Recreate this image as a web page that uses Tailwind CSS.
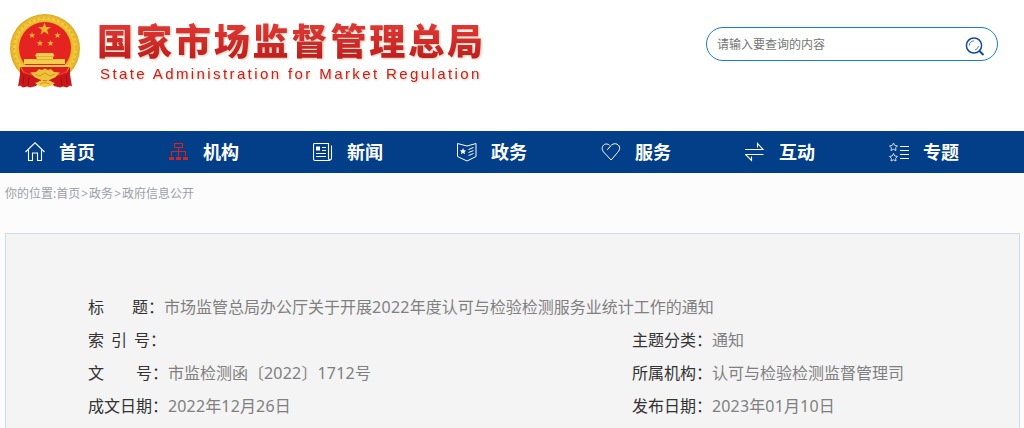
<!DOCTYPE html>
<html lang="zh-CN">
<head>
  <meta charset="UTF-8">
  <meta name="viewport" content="width=device-width, initial-scale=1.0">
  <title>国家市场监督管理总局</title>
  <script src="https://cdn.jsdelivr.net/npm/@tailwindcss/browser@4"></script>
</head>
<body class="bg-[#fcfcfc] font-['Noto_Sans','Noto_Sans_CJK_SC',sans-serif]">

  <header class="bg-white h-[131px] flex items-start justify-between">
    <div class="flex items-start pl-[9px] pt-[13px]">
      <svg class="w-[72px] h-[76px] shrink-0" viewBox="0 0 72 76">
        <defs>
          <radialGradient id="gold" cx="50%" cy="50%" r="50%">
            <stop offset="72%" stop-color="#dda91c"/>
            <stop offset="87%" stop-color="#f4cd42"/>
            <stop offset="100%" stop-color="#dba61c"/>
          </radialGradient>
        </defs>
        <ellipse cx="36" cy="35.500" rx="35" ry="34.500" fill="url(#gold)"/>
        <ellipse cx="36" cy="35.500" rx="31" ry="30.500" fill="none" stroke="#e2b02a" stroke-width="2" stroke-dasharray="2 3"/>
        <circle cx="36" cy="35" r="26" fill="#e52320"/>
        <path d="M35.500 9.500l1.600 4.600h4.900l-3.900 2.900 1.500 4.700-4.100-2.900-4.100 2.900 1.500-4.700-3.900-2.900h4.900z" fill="#e8b52d"/>
        <g fill="#e8ae36">
          <path id="star" d="M23 19l.9 2.200 2.300.1-1.800 1.500.6 2.300-2-1.300-2 1.300.6-2.300-1.800-1.500 2.300-.1z"/>
          <use href="#star" x="25.500"/>
          <use href="#star" x="8" y="8"/>
          <use href="#star" x="18.500" y="8"/>
        </g>
        <g fill="#f5cd4c">
          <path d="M27.500 40h16.500l1.500 3-1.500.5v2.500H56v5H15v-5h12.500v-2.500l-1.500-.5z"/>
          <path d="M12 52h48l-1 2H13z"/>
        </g>
        <path d="M27 43.500h18M26 46.500h20" stroke="#d9a02c" stroke-width=".7"/>
        <path d="M12 54h48l-5 9-12 5H29l-12-5z" fill="#dc1f1c"/>
        <path d="M11 54l4 6 14 4 1 5-3 4-6 1.500-3-1-4 1-3-2-2 1 2-12zM61 54l-4 6-14 4-1 5 3 4 6 1.500 3-1 4 1 3-2 2 1-2-12z" fill="#cb1719"/>
        <path d="M15 62l-1 9M20 64l-1 8M57 62l1 9M52 64l1 8" stroke="#9b1115" stroke-width="1"/>
        <path d="M13 58c6 3 10 5 15 5M59 58c-6 3-10 5-15 5" stroke="#ee3d35" stroke-width="1.200" fill="none"/>
        <path d="M30 56l3 1 3-1.500 3 1.500 3-1 3 3 6 .5-5 5-7 3h-6l-7-3-5-5 6-.5z" fill="#eec23a"/>
        <path d="M29 69l4-2 3 2 3-2 4 2 3 1-4 3-3 .5-3 1-3-1-3-.5-4-3z" fill="#f3cc41"/>
        <path d="M26 61l5 2 5-3 5 3 5-2M31 71l5-1.500 5 1.500" stroke="#c78d18" stroke-width=".8" fill="none"/>
      </svg>
      <div class="pl-[16px] pt-[1px] [filter:drop-shadow(1px_1px_1px_#d8c3a8)]">
        <h1 class="h-[50px] leading-[50px] text-[36px] tracking-[2.9px] font-black whitespace-nowrap font-['Noto_Sans_CJK_SC',sans-serif] text-transparent bg-clip-text bg-linear-to-b from-[#e8403c] to-[#bb1719]">国家市场监督管理总局</h1>
        <p class="pl-[3px] text-[15px] leading-[20px] tracking-[2.4px] whitespace-nowrap text-[#c9211f] font-['Liberation_Sans',sans-serif]">State Administration for Market Regulation</p>
      </div>
    </div>

    <div class="mt-[27px] mr-[26px] w-[292px] h-[34px] rounded-full border border-[#1c7cd5] flex items-center justify-between pl-[10px] pr-[12px]">
      <span class="text-[12px] text-[#757575] leading-none pt-[2px]">请输入要查询的内容</span>
      <svg class="w-[20px] h-[20px] mt-[5px]" viewBox="0 0 20 20" fill="none" stroke="#174b98">
        <circle cx="9" cy="8.500" r="7.600" stroke-width="1.500"/>
        <path d="M4.300 8.500A4.700 4.700 0 0 1 9 3.800M13.500 9a4.700 4.700 0 0 1-3.500 4" stroke="#5580b7"/>
        <path d="M14.500 14l4 4" stroke-width="2"/>
      </svg>
    </div>
  </header>

  <nav class="bg-[#023f88] h-[42px] grid grid-cols-[repeat(6,144px)_1fr] pl-[25px] text-white text-[18px] font-bold">
    <a class="flex items-center gap-[14px]">
      <svg class="w-[20px] h-[20px]" viewBox="0 0 20 20" fill="none" stroke="#fff" stroke-width="1.100">
        <path d="M.5 10L10 .8 19.500 10M3.500 8v10.500h4V11h5v7.500h4V8"/>
      </svg>
      <span>首页</span>
    </a>
    <a class="flex items-center gap-[14px]">
      <svg class="w-[20px] h-[20px]" viewBox="0 0 20 20" fill="none" stroke="#d42323" stroke-width="1.100">
        <path d="M5.500 1.500h8v4h-8zM9.500 5.500v9M2.500 14V9.500h14V14"/>
        <path d="M0 16.500h5M7 16.500h5M14 16.500h5" stroke-width="3"/>
      </svg>
      <span>机构</span>
    </a>
    <a class="flex items-center gap-[14px]">
      <svg class="w-[20px] h-[20px]" viewBox="0 0 20 20" fill="none" stroke="#fff" stroke-width="1.100">
        <path d="M1.500 1.500h14V16q0 2 1.500 2t1.500-2V3.500M1.500 1.500q-1 0-1 1V17q0 1.500 1.500 1.500h15"/>
        <path d="M9 5.500h4M9 8.500h4M3 11.500h10M3 14.500h10"/>
        <path d="M3 4.500h4v4H3z" fill="#fff" stroke="none"/>
      </svg>
      <span>新闻</span>
    </a>
    <a class="flex items-center gap-[14px]">
      <svg class="w-[20px] h-[20px]" viewBox="0 0 20 20" fill="none" stroke="#fff" stroke-width="1">
        <path d="M.5 1.500L10 4l9-2.500v13L10 19 .5 14.500z"/>
        <path d="M11.500 7.500l5-2M11.500 10.500l5-2M11.500 13.500l5-2"/>
        <path d="M6 6l.9 2.200 2.300.2-1.700 1.500.5 2.400-2-1.300-2 1.300.5-2.400-1.700-1.500 2.300-.2z" fill="#fff" stroke="none"/>
      </svg>
      <span>政务</span>
    </a>
    <a class="flex items-center gap-[14px]">
      <svg class="w-[20px] h-[20px]" viewBox="0 0 20 20" fill="none" stroke="#fff" stroke-width="1">
        <path d="M6.300 7.800L9.500 4C12.500.3 17.500 1.500 18.500 5c.5 2-.3 3.700-2 5.500L10.200 18 3.500 11C1 8.500.5 6 2 3.800 3.500 1.500 6.500 1.500 8.500 3.200"/>
      </svg>
      <span>服务</span>
    </a>
    <a class="flex items-center gap-[14px]">
      <svg class="w-[20px] h-[20px]" viewBox="0 0 20 20" fill="none" stroke="#fff" stroke-width="1.100">
        <path d="M0 7.500h18L12.500 1.500v4M18.500 12.500H.5l6 6v-4"/>
      </svg>
      <span>互动</span>
    </a>
    <a class="flex items-center gap-[14px]">
      <svg class="w-[20px] h-[20px]" viewBox="0 0 20 20" fill="none" stroke="#fff" stroke-width="1">
        <path d="M11 4.500h9M11 8.500h9M11 12.500h9M11 16.500h9"/>
        <path id="topic" d="M4.500 1l1.300 2.500 2.700.4-1.900 1.900.4 2.700-2.500-1.200L2 8.500l.4-2.700L.5 3.900l2.700-.4z" stroke-width=".8"/>
        <use href="#topic" y="10.500"/>
      </svg>
      <span>专题</span>
    </a>
  </nav>

  <div class="h-[60px] pl-[5px] pt-[12px] text-[12px] leading-[18px] text-[#9a9fa8]">你的位置:<a>首页</a><span class="px-[1px]">&gt;</span><a>政务</a><span class="px-[1px]">&gt;</span><a>政府信息公开</a></div>

  <main class="ml-[5px] w-[1015px] h-[195px] border border-b-0 border-[#d0dbe8] bg-[#f4f4f4] pl-[82px] pt-[57px]">
    <div class="grid grid-cols-[544px_1fr] auto-rows-[33px] items-center text-[16px] leading-[33px] text-[#808080] whitespace-nowrap">
      <div class="flex col-span-2">
        <span class="w-[60px] flex justify-between text-[#333]"><span>标</span><span>题</span></span>
        <span class="w-[16px] text-[#333]">：</span>
        <span>市场监管总局办公厅关于开展<span class="tracking-[0.3px]">2022</span>年度认可与检验检测服务业统计工作的通知</span>
      </div>

      <div class="flex">
        <span class="w-[62px] flex justify-between text-[#333]"><span>索</span><span>引</span><span>号</span></span>
        <span class="text-[#333]">：</span>
      </div>
      <div class="flex">
        <span class="w-[80px] text-[#333]">主题分类：</span>
        <span>通知</span>
      </div>

      <div class="flex">
        <span class="w-[64px] flex justify-between text-[#333]"><span>文</span><span>号</span></span>
        <span class="w-[16px] text-[#333]">：</span>
        <span>市监检测函〔<span class="tracking-[0.2px]">2022</span>〕<span class="tracking-[0.2px]">1712</span>号</span>
      </div>
      <div class="flex">
        <span class="w-[80px] text-[#333]">所属机构：</span>
        <span>认可与检验检测监督管理司</span>
      </div>

      <div class="flex">
        <span class="w-[80px] text-[#333]">成文日期：</span>
        <span class="tracking-[0.15px]">2022年12月26日</span>
      </div>
      <div class="flex">
        <span class="w-[80px] text-[#333]">发布日期：</span>
        <span class="tracking-[0.15px]">2023年01月10日</span>
      </div>
    </div>
  </main>

</body>
</html>
